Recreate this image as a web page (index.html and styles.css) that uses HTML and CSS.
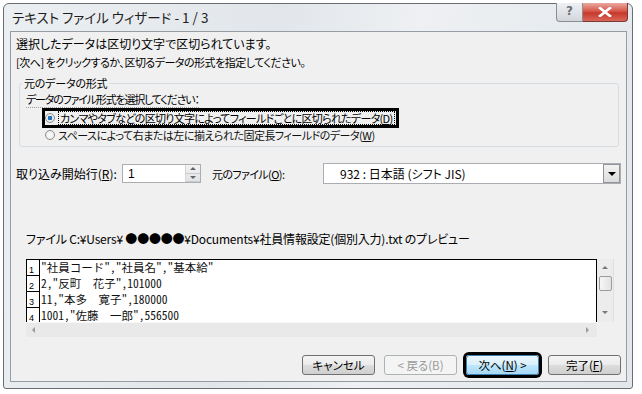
FILE: index.html
```html
<!DOCTYPE html>
<html lang="ja">
<head>
	<meta charset="utf-8">
	<title>テキスト ファイル ウィザード</title>
	<link rel="stylesheet" href="styles.css">
</head>
<body>

<div class="window">
	<div class="titlebar">
		<span class="title">テキスト ファイル ウィザード - 1 / 3</span>
		<div class="caption">
			<span class="cap-help">?</span>
			<span class="cap-close">
				<svg width="14" height="10" viewBox="0 0 14 10"><path d="M2 1 L12 9 M12 1 L2 9" stroke="#fff" stroke-width="2.6" stroke-linecap="square"/></svg>
			</span>
		</div>
	</div>

	<div class="client">
		<p class="line">選択したデータは区切り文字で区切られています。</p>
		<p class="line second">[次へ] をクリックするか、区切るデータの形式を指定してください。</p>

		<fieldset class="group">
			<legend>元のデータの形式</legend>
			<p class="prompt"><span>データのファイル形式を選択してください：</span></p>
			<div class="option selected">
				<span class="radio on"></span>
				<span class="focus">カンマやタブなどの区切り文字によってフィールドごとに区切られたデータ(<u>D</u>)</span>
			</div>
			<div class="option">
				<span class="radio"></span>
				<span class="opt-text">スペースによって右または左に揃えられた固定長フィールドのデータ(<u>W</u>)</span>
			</div>
		</fieldset>

		<div class="start-row">
			<span class="lbl-start">取り込み開始行(<u>R</u>):</span>
			<div class="spin">
				<span class="spin-val">1</span>
				<span class="spin-btns">
					<span class="spin-up"></span>
					<span class="spin-down"></span>
				</span>
			</div>
			<span class="lbl-origin">元のファイル(<u>O</u>):</span>
			<div class="select">
				<span class="select-val">932 : 日本語 (シフト JIS)</span>
				<span class="select-btn"><span class="tri-down"></span></span>
			</div>
		</div>

		<p class="preview-label">ファイル C:¥Users¥ ●●●●●¥Documents¥社員情報設定(個別入力).txt のプレビュー</p>

		<div class="preview">
			<div class="preview-text">
				<div class="prow"><span class="num">1</span><span class="data">"社員コード","社員名","基本給"</span></div>
				<div class="prow"><span class="num">2</span><span class="data">2,"反町　花子",101000</span></div>
				<div class="prow"><span class="num">3</span><span class="data">11,"本多　寛子",180000</span></div>
				<div class="prow"><span class="num">4</span><span class="data">1001,"佐藤　一郎",556500</span></div>
			</div>
			<div class="vscroll">
				<span class="arrow-up"></span>
				<span class="thumb"></span>
				<span class="arrow-down"></span>
			</div>
			<div class="hscroll">
				<span class="arrow-left"></span>
				<span class="arrow-right"></span>
			</div>
			<div class="corner"></div>
		</div>

		<div class="buttons">
			<button class="btn" type="button">キャンセル</button>
			<button class="btn disabled" type="button">&lt; 戻る(B)</button>
			<button class="btn default" type="button">次へ(<u>N</u>) &gt;</button>
			<button class="btn" type="button">完了(<u>F</u>)</button>
		</div>
	</div>
</div>

</body>
</html>
```

FILE: styles.css
```css
* {
	margin: 0;
	padding: 0;
	box-sizing: border-box;
}

body {
	width: 642px;
	height: 394px;
	overflow: hidden;
	background: #fff;
	font-family: "Noto Sans CJK JP", "Noto Sans", sans-serif;
	font-size: 12px;
	color: #000;
	font-feature-settings: "palt";
}

u {
	text-decoration-thickness: 1px;
	text-underline-offset: 1px;
}

/* window frame */
.window {
	margin: 3px 0 0 3px;
	width: 630px;
	height: 386px;
	border: 1px solid #686d73;
	border-radius: 6px 6px 3px 3px;
	background: linear-gradient(100deg, #eceff2 0%, #e2e6ea 40%, #eef0f3 60%, #e3e7eb 100%);
	display: flex;
	flex-direction: column;
	padding: 0 5px 6px 6px;
}

.titlebar {
	height: 27px;
	display: flex;
	align-items: flex-start;
}

.title {
	padding: 5px 0 0 2px;
	font-size: 13.5px;
	line-height: 17px;
	color: #1e1e1e;
}

.caption {
	margin: -1px -1px 0 auto;
	display: flex;
	height: 19px;
}

.cap-help {
	width: 27px;
	height: 19px;
	border: 1px solid #8a8f95;
	border-top: none;
	border-radius: 0 0 0 4px;
	background: linear-gradient(#eef0f3, #d3d7dc);
	color: #6a6f75;
	font-family: "DejaVu Sans", sans-serif;
	font-size: 12px;
	font-weight: bold;
	line-height: 17px;
	text-align: center;
}

.cap-close {
	width: 45px;
	height: 19px;
	border: 1px solid #7a3a35;
	border-left: none;
	border-top: none;
	border-radius: 0 0 4px 0;
	background: linear-gradient(#e9a99f 0%, #d7574a 45%, #c7382b 55%, #d9675a 100%);
	display: flex;
	align-items: center;
	justify-content: center;
}

/* client area */
.client {
	flex: 1;
	border: 1px solid #959ca3;
	background: #f0f0f0;
	padding: 3px 4px 0 5px;
	display: flex;
	flex-direction: column;
}

.line {
	line-height: 18px;
}

.line.second {
	font-size: 11px;
	letter-spacing: -0.5px;
}

.group {
	margin: 4px 3px 0 3px;
	border: 1px solid #d5dde3;
	border-radius: 3px;
	padding: 0 6px 4px 6px;
}

.group legend {
	margin-left: -4px;
	padding: 0 2px;
	line-height: 16px;
	font-size: 11px;
	letter-spacing: -0.2px;
}

.prompt {
	line-height: 16px;
	font-size: 11px;
	letter-spacing: -1.2px;
}

.prompt span {
	border-bottom: 1px dotted #9a9a9a;
}

.option {
	margin-left: 16px;
	display: flex;
	align-items: center;
	width: fit-content;
	height: 14px;
	border-left: 3px solid transparent;
	line-height: 12px;
	font-size: 11px;
}

.option.selected {
	margin-top: 1px;
	height: 20px;
	border: 3px solid #000;
	padding-right: 1px;
}

.radio {
	width: 10px;
	height: 10px;
	border-radius: 50%;
	border: 1px solid #8c8e90;
	background: radial-gradient(circle, #fff 0%, #e6e6e6 100%);
	margin-right: 3px;
	flex: none;
}

.radio.on {
	background: radial-gradient(circle, #2b86d6 0%, #1664b0 35%, #e2e8ee 45%, #f4f4f4 100%);
}

.focus {
	border: 1px dotted #000;
	padding: 0 1px;
	letter-spacing: -0.7px;
}

.opt-text {
	color: #111;
	letter-spacing: -0.5px;
}

/* start row */
.start-row {
	margin-top: 16px;
	height: 21px;
	display: flex;
	align-items: center;
}

.lbl-start {
	width: 106px;
}

.spin {
	width: 79px;
	height: 19px;
	border: 1px solid #abadb3;
	background: #fff;
	display: flex;
	align-items: center;
}

.spin-val {
	flex: 1;
	padding-left: 5px;
	font-family: "Liberation Sans", sans-serif;
}

.spin-btns {
	width: 15px;
	height: 17px;
	display: flex;
	flex-direction: column;
	border-left: 1px solid #d4d6d9;
	background: linear-gradient(#f3f3f3, #e1e1e1);
}

.spin-up, .spin-down {
	flex: 1;
	position: relative;
	border-bottom: 1px solid #c9cbce;
}

.spin-up::after, .spin-down::after {
	content: "";
	position: absolute;
	left: 4px;
	border-left: 3px solid transparent;
	border-right: 3px solid transparent;
}

.spin-up::after {
	top: 2px;
	border-bottom: 3px solid #5a6670;
}

.spin-down::after {
	top: 2px;
	border-top: 3px solid #5a6670;
}

.lbl-origin {
	margin-left: 11px;
	width: 111px;
	font-size: 11px;
	letter-spacing: -0.6px;
}

.select {
	width: 298px;
	height: 21px;
	border: 1px solid #abadb3;
	background: #fff;
	display: flex;
	align-items: center;
}

.select-val {
	flex: 1;
	padding-left: 16px;
}

.select-btn {
	width: 17px;
	height: 19px;
	border: 1px solid #8f959a;
	background: linear-gradient(#f2f2f2, #dcdcdc);
	display: flex;
	align-items: center;
	justify-content: center;
}

.tri-down {
	border-left: 4px solid transparent;
	border-right: 4px solid transparent;
	border-top: 4px solid #000;
}

/* preview */
.preview-label {
	margin: 47px 0 0 10px;
	line-height: 16px;
	letter-spacing: -0.2px;
}

.preview {
	margin: 12px 0 0 10px;
	width: 588px;
	height: 78px;
	display: grid;
	grid-template-columns: 1fr 17px;
	grid-template-rows: 63px 15px;
}

.preview-text {
	border: 1px solid #000;
	border-bottom: none;
	background: #fff;
	overflow: hidden;
	font-family: "Noto Sans Mono CJK JP", "Liberation Mono", monospace;
	font-feature-settings: normal;
	font-size: 11.5px;
}

.prow {
	display: flex;
	height: 16px;
	line-height: 15px;
}

.num {
	width: 13px;
	flex: none;
	border-right: 1px solid #000;
	border-bottom: 1px solid #000;
	font-family: "Liberation Sans", sans-serif;
	font-size: 9px;
	line-height: 20px;
	padding-left: 2px;
}

.data {
	padding-left: 1px;
	white-space: pre;
	color: #111;
}

.vscroll {
	background: #ececec;
	border-right: 1px solid #e0e0e0;
	display: flex;
	flex-direction: column;
	align-items: center;
}

.arrow-up {
	margin-top: 7px;
	border-left: 3px solid transparent;
	border-right: 3px solid transparent;
	border-bottom: 3px solid #777;
}

.thumb {
	margin-top: 7px;
	width: 13px;
	height: 15px;
	border: 1px solid #9c9c9c;
	border-radius: 2px;
	background: linear-gradient(90deg, #f6f6f6, #e2e2e2);
}

.arrow-down {
	margin-top: auto;
	margin-bottom: 8px;
	border-left: 3px solid transparent;
	border-right: 3px solid transparent;
	border-top: 3px solid #777;
}

.hscroll {
	background: #e9e9e9;
	border-top: 1px solid #f8f8f8;
	display: flex;
	align-items: center;
	justify-content: space-between;
	padding: 0 8px 0 6px;
}

.arrow-left {
	border-top: 3px solid transparent;
	border-bottom: 3px solid transparent;
	border-right: 3px solid #9a9a9a;
}

.arrow-right {
	border-top: 3px solid transparent;
	border-bottom: 3px solid transparent;
	border-left: 3px solid #9a9a9a;
}

.corner {
	background: #f0f0f0;
}

/* buttons */
.buttons {
	margin: 18px 1px 0 0;
	display: flex;
	justify-content: flex-end;
	gap: 9px;
}

.btn {
	width: 73px;
	height: 20px;
	border: 1px solid #707070;
	border-radius: 3px;
	background: linear-gradient(#f4f4f4 0%, #ebebeb 50%, #dddddd 51%, #cfcfcf 100%);
	font-family: "Noto Sans CJK JP", sans-serif;
	font-size: 11.5px;
	line-height: 16px;
	color: #000;
	font-feature-settings: "palt";
}

.btn.disabled {
	border-color: #adb2b5;
	background: #f4f4f4;
	color: #9a9a9a;
}

.btn.default {
	border-color: #3c7fb1;
	background: linear-gradient(#eaf6fd 0%, #d9f0fc 50%, #bee6fd 51%, #a7d9f5 100%);
	box-shadow: 0 0 0 3px #000;
}
```
